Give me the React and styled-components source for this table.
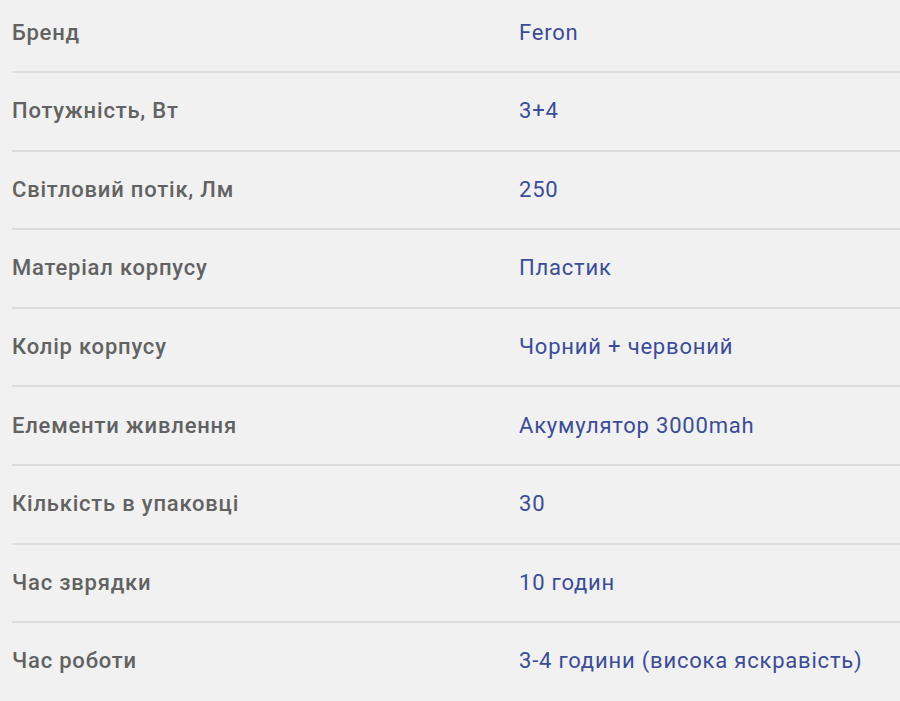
import React from 'react';
import styled, { createGlobalStyle } from 'styled-components';

const GlobalStyle = createGlobalStyle`
  html, body {
    margin: 0;
    padding: 0;
    background: #f1f1f1;
    overflow: hidden;
  }
`;

const Specs = styled.dl`
  margin: -5.6px 0 0;
  padding: 0 0 0 12px;
  width: 888px;
  font-family: Roboto, 'Liberation Sans', sans-serif;
  font-size: 22px;
  line-height: 26px;
  letter-spacing: 0.8px;
`;

const Row = styled.div`
  display: grid;
  grid-template-columns: 507px 1fr;
  padding: 25.3px 0;
  border-bottom: ${props => (props.last ? 'none' : '2px solid #dcdcdc')};
`;

const Label = styled.dt`
  margin: 0;
  color: #626262;
  font-weight: 500;
`;

const Value = styled.dd`
  margin: 0;
  color: #3b4c96;
  font-weight: 400;
  white-space: nowrap;
`;

const specs = [
  ['Бренд', 'Feron'],
  ['Потужність, Вт', '3+4'],
  ['Світловий потік, Лм', '250'],
  ['Матеріал корпусу', 'Пластик'],
  ['Колір корпусу', 'Чорний + червоний'],
  ['Елементи живлення', 'Акумулятор 3000mah'],
  ['Кількість в упаковці', '30'],
  ['Час зврядки', '10 годин'],
  ['Час роботи', '3-4 години (висока яскравість)'],
];

export default function App() {
  return (
    <>
      <GlobalStyle />
      <Specs>
        {specs.map(([label, value], i) => (
          <Row key={label} last={i === specs.length - 1}>
            <Label>{label}</Label>
            <Value>{value}</Value>
          </Row>
        ))}
      </Specs>
    </>
  );
}
